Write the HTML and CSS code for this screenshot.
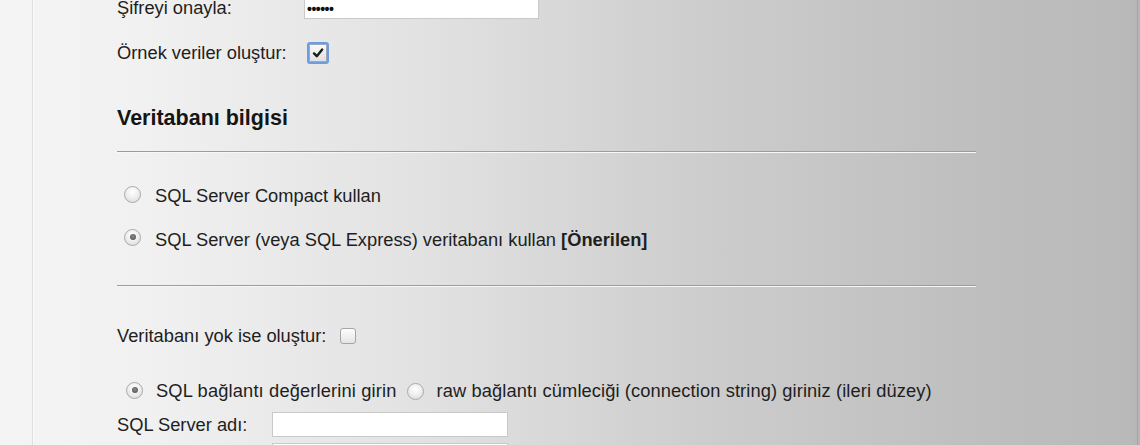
FILE: index.html
```html
<!DOCTYPE html>
<html lang="tr">
<head>
<meta charset="utf-8">
<title>Kurulum</title>
<link rel="stylesheet" href="styles.css">
</head>
<body>
<div class="frame">
  <div class="content">
    <div class="row row-pass">
      <span class="label label-wide">Şifreyi onayla:</span>
      <span class="field field-pass"><span class="dots">••••••</span></span>
    </div>
    <div class="row row-sample">
      <span class="label label-wide">Örnek veriler oluştur:</span>
      <span class="cb cb-focus">
        <svg viewBox="0 0 12 12" width="12" height="12"><path d="M2 6.4 L4.8 9.2 L10.2 2.6" fill="none" stroke="#1a1a1a" stroke-width="2.4" stroke-linecap="round" stroke-linejoin="round"/></svg>
      </span>
    </div>
    <h2 class="heading">Veritabanı bilgisi</h2>
    <div class="rule rule-1"></div>
    <div class="row row-radio1">
      <span class="radio"></span>
      <span class="radio-text">SQL Server Compact kullan</span>
    </div>
    <div class="row row-radio2">
      <span class="radio checked"></span>
      <span class="radio-text">SQL Server (veya SQL Express) veritabanı kullan <b>[Önerilen]</b></span>
    </div>
    <div class="rule rule-2"></div>
    <div class="row row-create">
      <span class="label">Veritabanı yok ise oluştur:</span>
      <span class="cb cb-plain"></span>
    </div>
    <div class="row row-mode">
      <span class="radio checked radio-mode"></span>
      <span class="radio-text mode-text">SQL bağlantı değerlerini girin</span>
      <span class="radio radio-raw"></span>
      <span class="radio-text raw-text">raw bağlantı cümleciği (connection string) giriniz (ileri düzey)</span>
    </div>
    <div class="row row-server">
      <span class="label label-server">SQL Server adı:</span>
      <span class="field field-server"></span>
    </div>
    <div class="row row-next">
      <span class="label label-server"></span>
      <span class="field field-server"></span>
    </div>
  </div>
</div>
</body>
</html>
```
FILE: styles.css
```css
html, body {
  margin: 0;
  padding: 0;
}
body {
  width: 1140px;
  height: 445px;
  overflow: hidden;
  font-family: "Liberation Sans", Arial, sans-serif;
  font-size: 18.3px;
  color: #1e1e1e;
  background: linear-gradient(to right, #f4f4f4 0px, #f1f1f1 140px, #e2e2e2 420px, #cdcdcd 700px, #bfbfbf 960px, #b9b9b9 1130px, #b4b4b4 1140px);
}
.frame {
  margin-left: 32px;
  width: 1104px;
  height: 445px;
  border-left: 1px solid #dedede;
  border-right: 1px solid #a6a6a6;
  box-shadow: inset 1px 0 0 #fafafa;
}
.content {
  padding-left: 84px;
  display: flex;
  flex-direction: column;
}
.row {
  display: flex;
  align-items: center;
  height: 26px;
}
.label-wide {
  width: 187px;
  flex: none;
}
.label-server {
  width: 155px;
  flex: none;
}
.field {
  display: block;
  background: #fff;
  border: 1px solid #c9c9c9;
  box-sizing: border-box;
}
.field-pass {
  width: 235px;
  height: 26px;
  display: flex;
  align-items: center;
  padding-left: 2px;
}
.dots {
  font-size: 14px;
  letter-spacing: -0.5px;
  font-weight: bold;
  color: #111;
  position: relative;
  top: 3px;
}
.field-server {
  width: 236px;
  height: 25px;
}
.row-pass {
  margin-top: -7px;
}
.row-pass .label {
  position: relative;
  top: 2px;
}
.row-sample {
  margin-top: 21px;
}
.cb {
  display: inline-flex;
  align-items: center;
  justify-content: center;
  box-sizing: border-box;
  flex: none;
}
.cb-focus {
  width: 22px;
  height: 22px;
  margin-left: 3px;
  border: 2px solid #6b9de0;
  border-radius: 3px;
  background: linear-gradient(#fbfbfb, #dedede);
  box-shadow: inset 0 0 0 1px #9aa9bd;
}
.cb-plain {
  width: 16px;
  height: 16px;
  margin-left: 14px;
  border: 1px solid #a5a5a5;
  border-radius: 3px;
  background: linear-gradient(#fdfdfd, #e4e4e4);
}
.heading {
  margin: 39px 0 0 0;
  height: 26px;
  line-height: 26px;
  font-size: 21.5px;
  font-weight: bold;
  color: #151515;
}
.rule {
  width: 859px;
  height: 1px;
  background: #9c9c9c;
  border-bottom: 1px solid #f8f8f8;
}
.rule-1 {
  margin-top: 20px;
}
.rule-2 {
  margin-top: 32px;
}
.radio {
  width: 17px;
  height: 17px;
  box-sizing: border-box;
  border-radius: 50%;
  border: 1px solid #a9a9a9;
  background: radial-gradient(circle at 50% 35%, #ffffff 0, #f2f2f2 40%, #d6d6d6 100%);
  flex: none;
  margin-left: 7px;
  margin-right: 14px;
  position: relative;
}
.radio.checked::after {
  content: "";
  position: absolute;
  left: 4.5px;
  top: 4.5px;
  width: 6px;
  height: 6px;
  border-radius: 50%;
  background: radial-gradient(circle at 50% 40%, #8a8a8a, #4a4a4a);
}
.row-radio1 {
  margin-top: 30px;
}
.row-radio1 .radio {
  top: -2px;
}
.row-radio2 {
  margin-top: 18px;
}
.row-radio2 .radio {
  top: -3px;
}
.row-create {
  margin-top: 36px;
}
.row-mode {
  margin-top: 29px;
}
.radio-mode {
  margin-left: 9px;
  margin-right: 13px;
  top: -1px;
}
.mode-text {
  letter-spacing: 0.15px;
}
.radio-raw {
  margin-left: 10px;
  margin-right: 13px;
}
.raw-text {
  letter-spacing: 0.1px;
}
.row-server {
  margin-top: 8px;
  height: 25px;
}
.row-next {
  margin-top: 6px;
  height: 25px;
}
```
